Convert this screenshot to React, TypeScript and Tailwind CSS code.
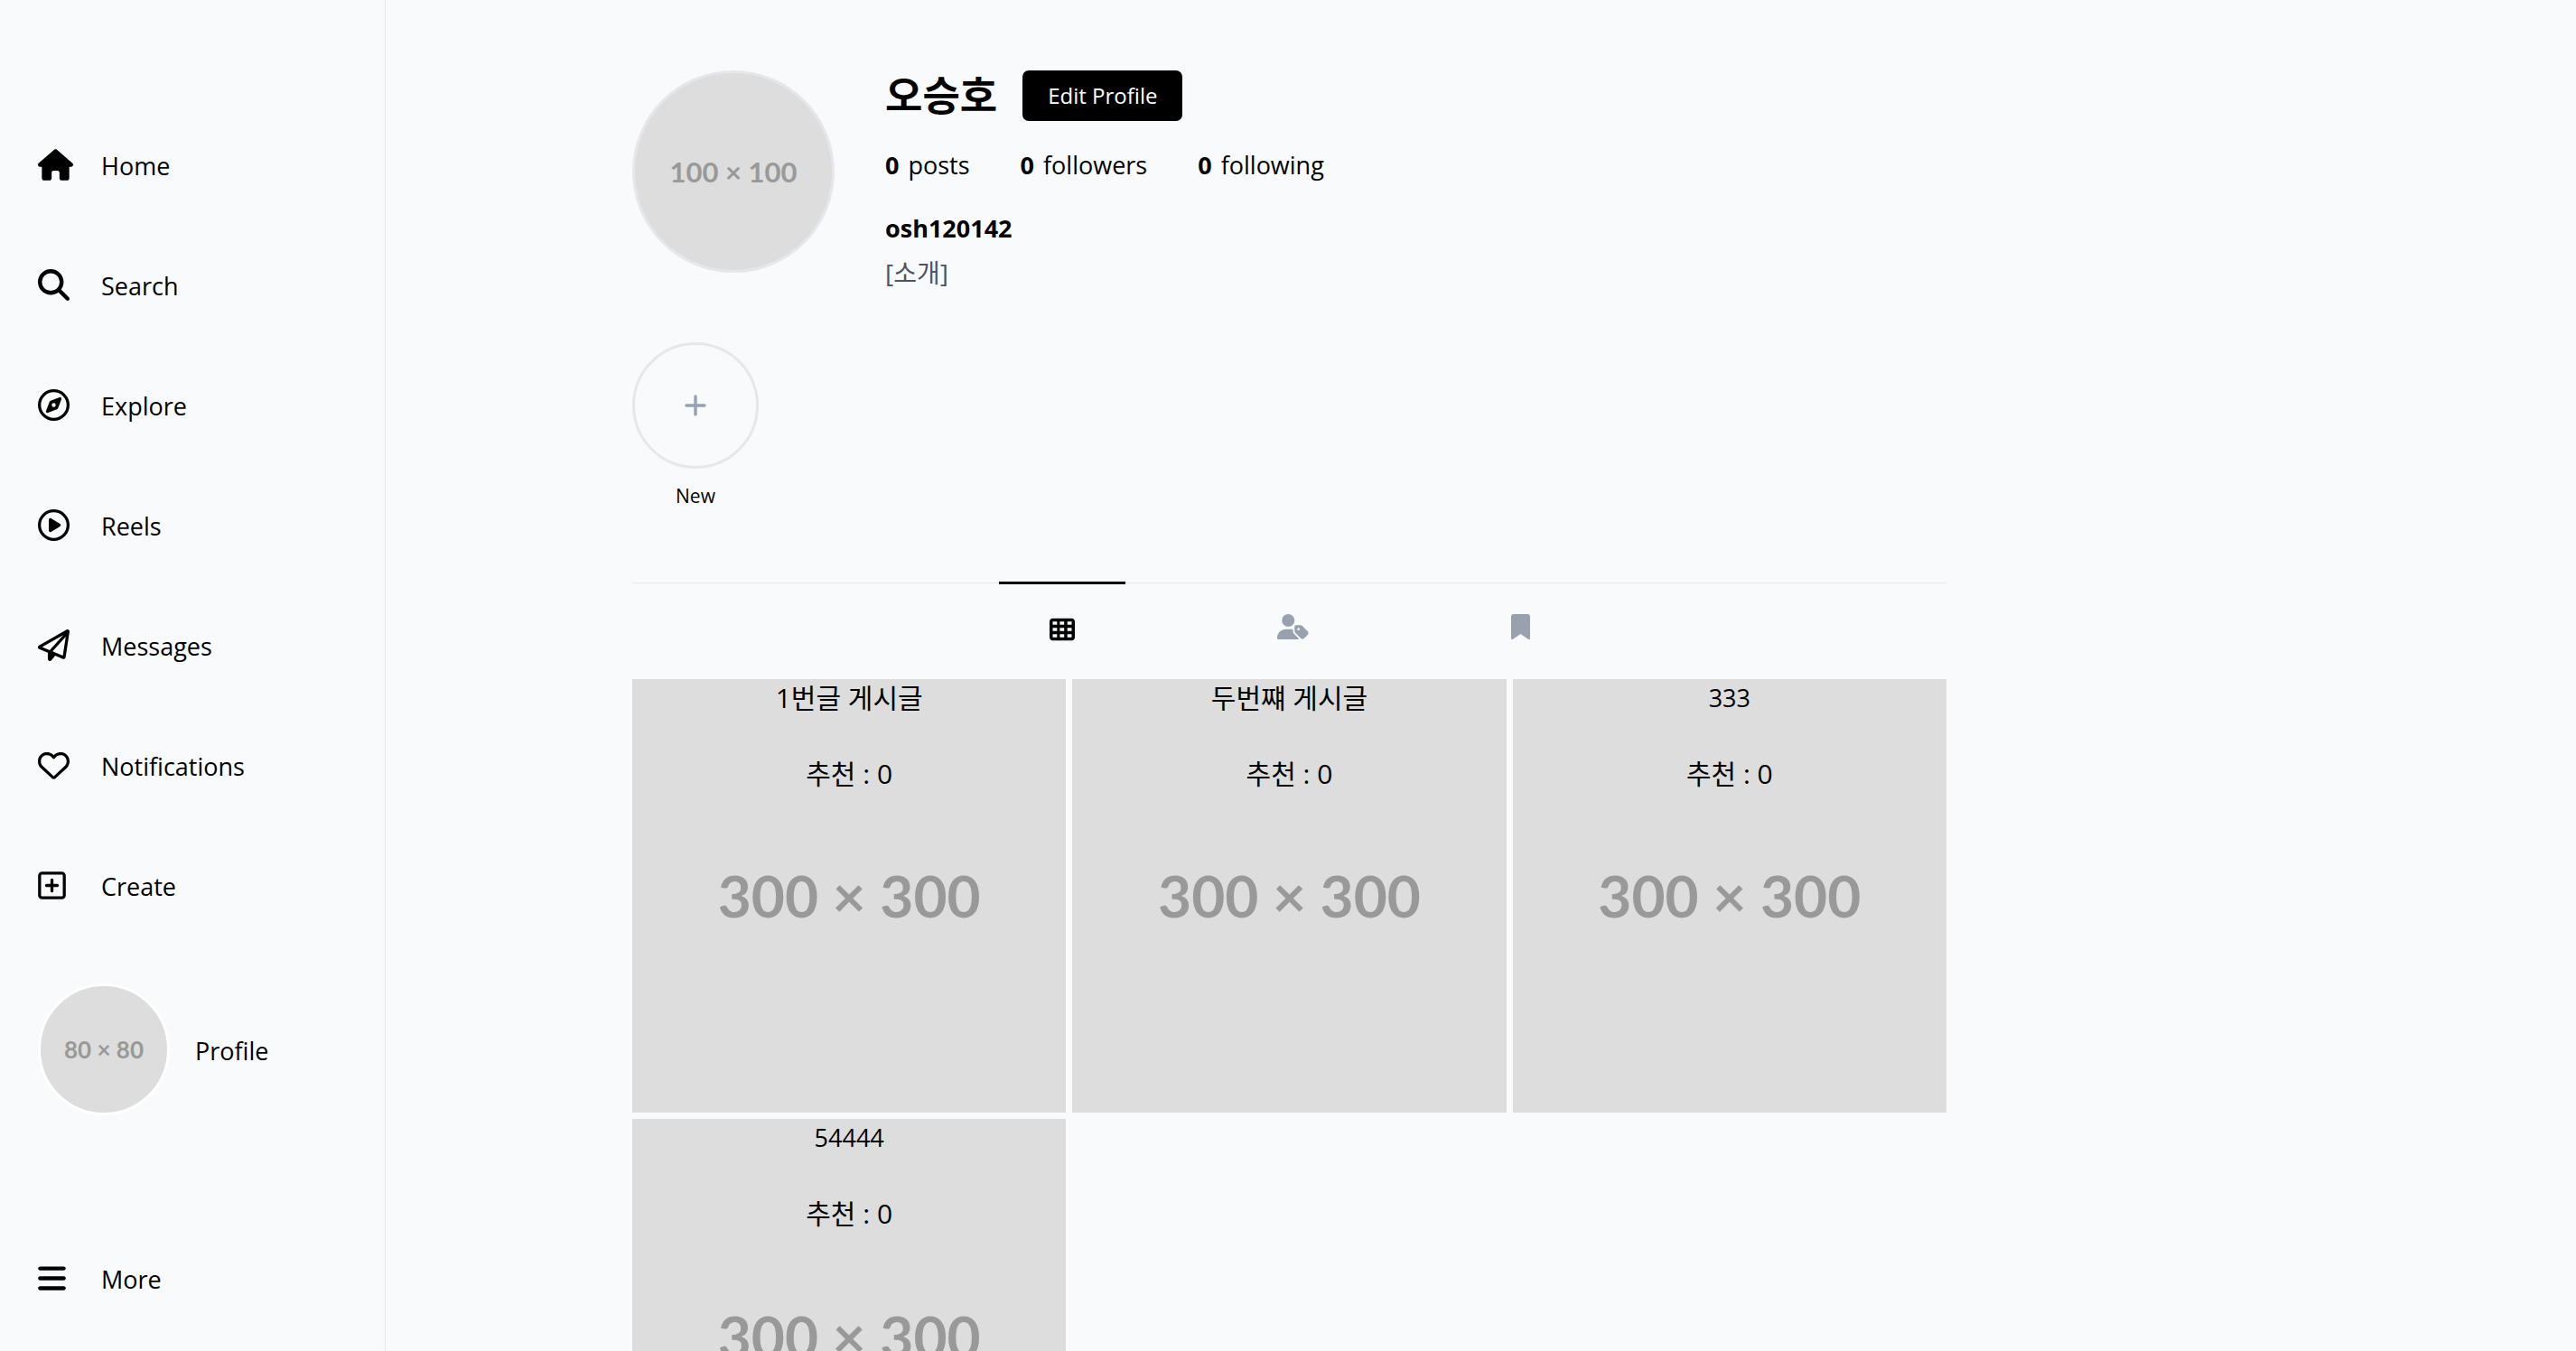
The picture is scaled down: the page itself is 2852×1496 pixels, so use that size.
import type { ReactNode } from "react";
import {
  FaBars,
  FaBookmark,
  FaHouse,
  FaMagnifyingGlass,
  FaRegCirclePlay,
  FaRegCompass,
  FaRegHeart,
  FaRegPaperPlane,
  FaRegSquarePlus,
  FaTableCells,
  FaUserTag,
} from "react-icons/fa6";

const navItems: { label: string; icon: ReactNode }[] = [
  { label: "Home", icon: <FaHouse className="h-[35px] w-[39px]" /> },
  { label: "Search", icon: <FaMagnifyingGlass className="size-[35px]" /> },
  { label: "Explore", icon: <FaRegCompass className="size-[35px]" /> },
  { label: "Reels", icon: <FaRegCirclePlay className="size-[35px]" /> },
  { label: "Messages", icon: <FaRegPaperPlane className="size-[35px]" /> },
  { label: "Notifications", icon: <FaRegHeart className="size-[35px]" /> },
  { label: "Create", icon: <FaRegSquarePlus className="h-[35px] w-[31px]" /> },
];

const stats = [
  { count: 0, label: "posts" },
  { count: 0, label: "followers" },
  { count: 0, label: "following" },
];

const posts = [
  { title: "1번글 게시글", likes: 0, hangul: true },
  { title: "두번쨰 게시글", likes: 0, hangul: true },
  { title: "333", likes: 0, hangul: false },
  { title: "54444", likes: 0, hangul: false },
];

function NavLink({ label, icon }: { label: string; icon: ReactNode }) {
  return (
    <a href="#" className="flex h-[49px] items-center gap-7">
      <span className="flex w-[42px] shrink-0">{icon}</span>
      <span className="pt-1">{label}</span>
    </a>
  );
}

function Sidebar() {
  return (
    <nav className="flex w-[427px] shrink-0 flex-col justify-between border-r border-gray-200 pt-[158px] pb-14 pl-[42px]">
      <div className="flex flex-col gap-[84px]">
        {navItems.map((item) => (
          <NavLink key={item.label} {...item} />
        ))}
        <a href="#" className="flex items-center gap-7">
          <span className="flex size-[146px] items-center justify-center rounded-full border-[3px] border-white bg-[#ddd] font-[Lato] text-[26px] font-bold text-[#999]">
            80 × 80
          </span>
          <span className="pt-1">Profile</span>
        </a>
      </div>
      <NavLink label="More" icon={<FaBars className="h-[35px] w-[31px]" />} />
    </nav>
  );
}

function ProfileHeader() {
  return (
    <header className="flex items-start gap-14">
      <div className="flex size-56 shrink-0 items-center justify-center rounded-full border-[3px] border-gray-200 bg-[#ddd] font-[Lato] text-[31px] font-bold text-[#999]">
        100 × 100
      </div>
      <div>
        <div className="flex h-14 items-center gap-7">
          <h1 className="text-[45px] leading-14 font-bold">오승호</h1>
          <button className="h-14 rounded-[7px] bg-black px-7 text-[24px] text-white">Edit Profile</button>
        </div>
        <ul className="mt-7 flex gap-14 leading-[42px]">
          {stats.map((s) => (
            <li key={s.label} className="flex gap-[10px]">
              <span className="font-bold">{s.count}</span>
              <span>{s.label}</span>
            </li>
          ))}
        </ul>
        <p className="mt-7 leading-[42px] font-bold">osh120142</p>
        <p className="mt-[7px] text-[28px] leading-[42px] text-gray-600">[소개]</p>
      </div>
    </header>
  );
}

function Tabs() {
  return (
    <div className="mt-[82px] flex h-[107px] justify-center gap-28 border-t border-gray-200 text-gray-400">
      <button aria-label="Posts" className="-mt-[2px] flex h-[102px] items-center border-t-[3px] border-black px-14 text-black">
        <FaTableCells className="size-7" />
      </button>
      <button aria-label="Tagged" className="flex h-24 items-center px-14">
        <FaUserTag className="h-7 w-[35px]" />
      </button>
      <button aria-label="Saved" className="flex h-24 items-center px-14">
        <FaBookmark className="h-7 w-[21px]" />
      </button>
    </div>
  );
}

function PostCard({ title, likes, hangul }: { title: string; likes: number; hangul: boolean }) {
  return (
    <a href="#" className="relative aspect-square bg-[#ddd] text-center leading-[42px]">
      <span className="absolute inset-0 flex items-center justify-center font-[Lato] text-[64px] font-bold text-[#999]">
        300 × 300
      </span>
      <span className="relative flex flex-col gap-[42px]">
        <span className={hangul ? "text-[30px]" : "text-[27px]"}>{title}</span>
        <span className="text-[30px]">추천 : {likes}</span>
      </span>
    </a>
  );
}

export default function App() {
  return (
    <div className="flex h-screen overflow-hidden bg-gray-50 font-['Open_Sans','Noto_Sans_CJK_KR',sans-serif] text-[27px] text-black">
      <Sidebar />
      <div className="flex-1 overflow-y-auto [scrollbar-width:none]">
        <main className="ml-[273px] w-3/5 pt-[78px]">
          <ProfileHeader />
          <section className="mt-14 flex">
            <button className="flex flex-col items-center">
              <span className="flex size-[140px] items-center justify-center rounded-full border-[3px] border-gray-200 text-gray-400">
                <svg viewBox="0 0 24 24" className="size-6" fill="none" stroke="currentColor" strokeWidth="3.4" strokeLinecap="round" aria-hidden="true">
                  <path d="M12 2v20M2 12h20" />
                </svg>
              </span>
              <span className="mt-4 text-[21px] leading-7">New</span>
            </button>
          </section>
          <Tabs />
          <section className="grid grid-cols-3 gap-[7px]">
            {posts.map((p) => (
              <PostCard key={p.title} {...p} />
            ))}
          </section>
        </main>
      </div>
    </div>
  );
}
